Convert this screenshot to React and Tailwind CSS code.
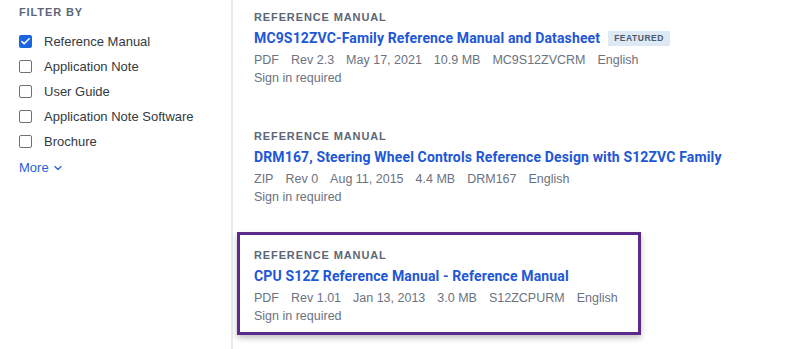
import { Check, ChevronDown } from 'lucide-react';

const filters = [
  { label: 'Reference Manual', checked: true },
  { label: 'Application Note', checked: false },
  { label: 'User Guide', checked: false },
  { label: 'Application Note Software', checked: false },
  { label: 'Brochure', checked: false },
];

const docs = [
  {
    title: 'MC9S12ZVC-Family Reference Manual and Datasheet',
    featured: true,
    meta: ['PDF', 'Rev 2.3', 'May 17, 2021', '10.9 MB', 'MC9S12ZVCRM', 'English'],
  },
  {
    title: 'DRM167, Steering Wheel Controls Reference Design with S12ZVC Family',
    meta: ['ZIP', 'Rev 0', 'Aug 11, 2015', '4.4 MB', 'DRM167', 'English'],
  },
  {
    title: 'CPU S12Z Reference Manual - Reference Manual',
    active: true,
    meta: ['PDF', 'Rev 1.01', 'Jan 13, 2013', '3.0 MB', 'S12ZCPURM', 'English'],
  },
];

const DocCard = ({ doc }) => (
  <div
    className={`flex flex-col self-start pl-[14px] pt-[13px] pb-[7px] border-[3px] ${
      doc.active
        ? 'w-[404px] border-[#5b2a8c] shadow-[0_3px_6px_rgba(0,0,0,0.25)]'
        : 'pr-[28px] border-transparent'
    }`}
  >
    <div className="text-[11px] font-bold tracking-[0.08em] text-[#5b6776] leading-[14px]">REFERENCE MANUAL</div>
    <div className="flex items-center gap-[8px] mt-[5px]">
      <a className="text-[14px] font-bold text-[#2156d6] leading-[18px] font-['Roboto',sans-serif] tracking-[0.01em]">{doc.title}</a>
      {doc.featured && (
        <span className="bg-[#dde9f5] text-[#4b5b6c] text-[8.5px] font-bold tracking-[0.06em] px-[6px] py-[3px] leading-[9px]">
          FEATURED
        </span>
      )}
    </div>
    <div className="flex gap-[12px] text-[12.5px] text-[#6b7280] mt-[4px] leading-[18px]">
      {doc.meta.map((m) => (
        <span key={m}>{m}</span>
      ))}
    </div>
    <div className="text-[12.5px] text-[#6b7280] leading-[18px]">Sign in required</div>
  </div>
);

export default function App() {
  return (
    <div className="flex w-[812px] h-[349px] bg-white font-['Liberation_Sans',Arial,sans-serif] overflow-hidden">
      <aside className="w-[233px] shrink-0 border-r-2 border-[#e7ebef] pl-[19px] pt-[5px]">
        <div className="text-[11px] font-bold tracking-[0.08em] text-[#5b6776] leading-[14px]">FILTER BY</div>
        <ul className="mt-[14px] flex flex-col gap-[8px]">
          {filters.map((f) => (
            <li key={f.label} className="flex items-center gap-[12px] h-[17px]">
              {f.checked ? (
                <span className="w-[13px] h-[13px] rounded-[2px] bg-[#1a66e0] flex items-center justify-center">
                  <Check size={11} strokeWidth={3.5} className="text-white" />
                </span>
              ) : (
                <span className="w-[13px] h-[13px] rounded-[2px] border-[1.5px] border-[#6f6f78]" />
              )}
              <span className="text-[13px] text-[#333a42]">{f.label}</span>
            </li>
          ))}
        </ul>
        <a className="mt-[8px] flex items-center gap-[3px] text-[13px] text-[#2a62d6]">
          More <ChevronDown size={12} strokeWidth={2.5} />
        </a>
      </aside>
      <main className="flex-1 flex flex-col pl-[4px] gap-[16px] -mt-[6px]">
        {docs.map((d) => (
          <DocCard key={d.title} doc={d} />
        ))}
      </main>
    </div>
  );
}
